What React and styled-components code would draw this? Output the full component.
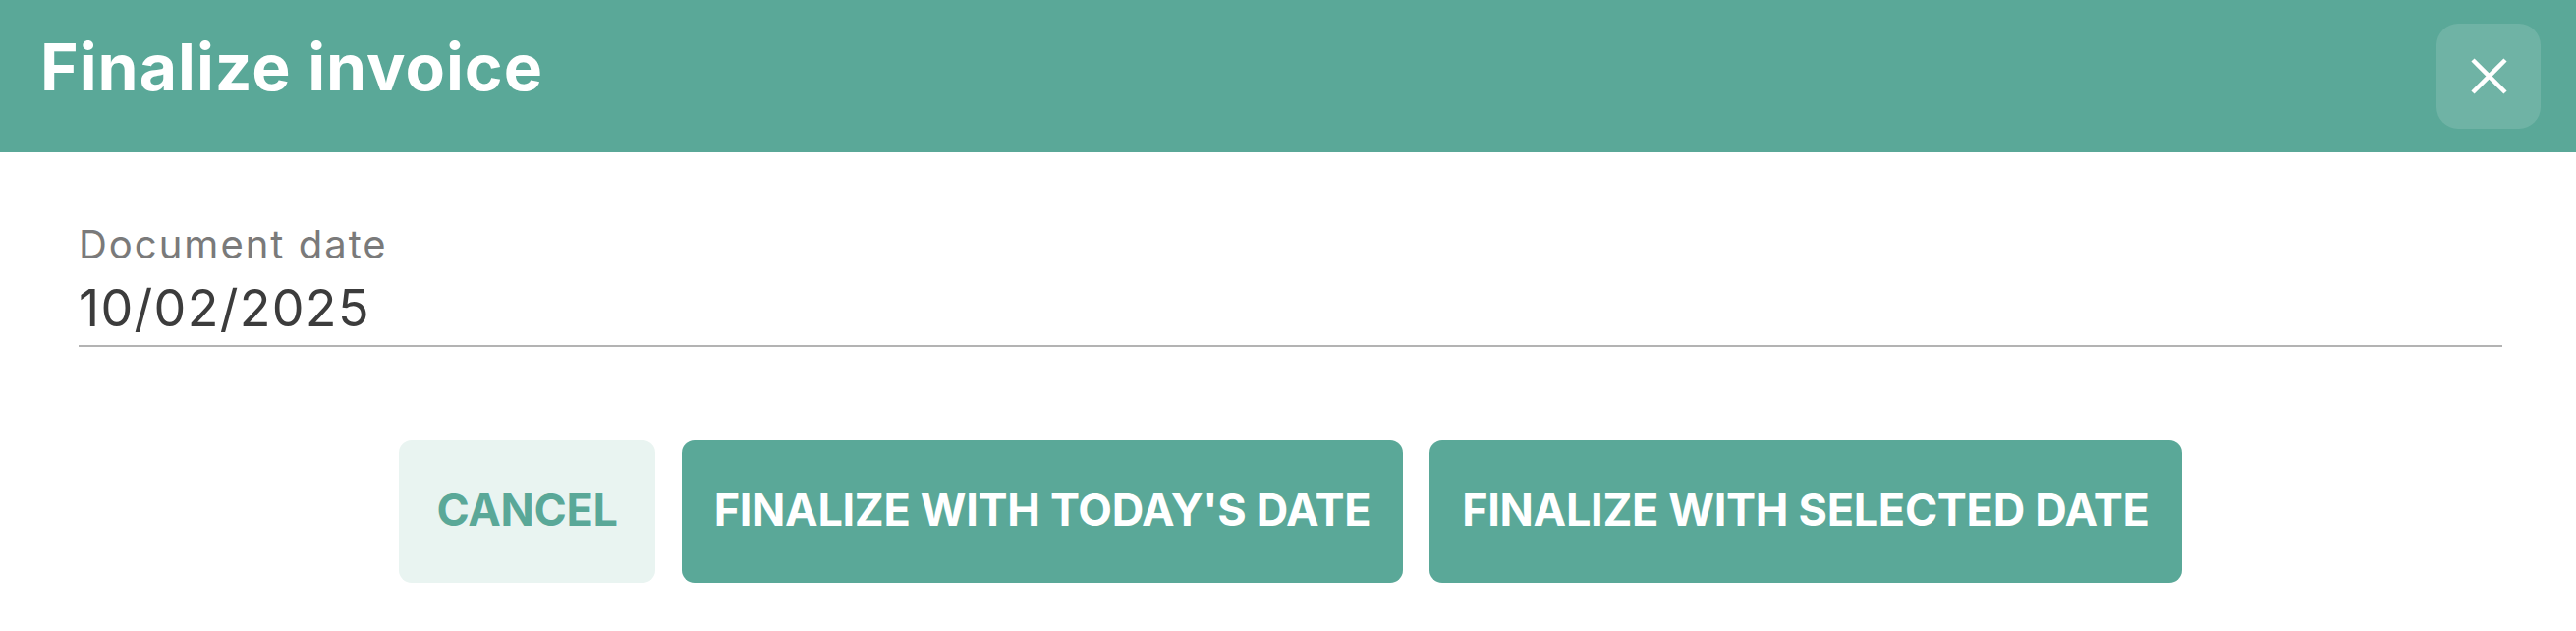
import styled, { createGlobalStyle } from "styled-components";

const GlobalStyle = createGlobalStyle`
    html, body {
        margin: 0;
        padding: 0;
        background: #ffffff;
    }
    body {
        font-family: Inter, "Liberation Sans", sans-serif;
    }
`;

const teal = "#5aa898";

const Dialog = styled.div`
    width: 2622px;
    height: 642px;
    display: flex;
    flex-direction: column;
    background: #ffffff;
`;

const Header = styled.div`
    height: 155px;
    flex-shrink: 0;
    display: flex;
    align-items: center;
    justify-content: space-between;
    padding: 0 36px 0 41px;
    background: ${teal};
    box-sizing: border-box;
`;

const Title = styled.h1`
    margin: 0;
    padding-bottom: 19px;
    font-size: 66px;
    line-height: 1;
    font-weight: 700;
    letter-spacing: 1px;
    color: #ffffff;
`;

const CloseButton = styled.button`
    width: 106px;
    height: 107px;
    border: none;
    border-radius: 22px;
    background: rgba(255, 255, 255, 0.13);
    display: flex;
    align-items: center;
    justify-content: center;
    padding: 0;
    cursor: pointer;
`;

const Body = styled.div`
    flex: 1;
    display: flex;
    flex-direction: column;
    padding: 70px 75px 49px 80px;
`;

const Field = styled.label`
    display: flex;
    flex-direction: column;
    gap: 10px;
    padding-bottom: 6px;
    border-bottom: 2px solid #b3b3b3;
`;

const FieldLabel = styled.span`
    font-size: 40px;
    line-height: 1.2;
    letter-spacing: 2px;
    color: #7a7a7a;
`;

const FieldValue = styled.span`
    font-size: 52px;
    line-height: 1.2;
    letter-spacing: 1.3px;
    color: #3c3c3c;
`;

const Actions = styled.div`
    margin-top: 95px;
    display: flex;
    justify-content: center;
    gap: 27px;
`;

const ActionButton = styled.button`
    height: 145px;
    padding: 0 ${(p) => (p.$primary ? "33px" : "38px")} 4px;
    border: none;
    border-radius: 13px;
    font-family: Inter, "Liberation Sans", sans-serif;
    font-size: 45px;
    line-height: 1;
    font-weight: 700;
    letter-spacing: -0.3px;
    text-transform: uppercase;
    cursor: pointer;
    background: ${(p) => (p.$primary ? teal : "#e9f4f1")};
    color: ${(p) => (p.$primary ? "#ffffff" : teal)};
`;

const CloseIcon = () => (
    <svg width="37" height="37" viewBox="0 0 37 37">
        <path d="M2 2 L35 35 M35 2 L2 35" stroke="#ffffff" strokeWidth="4.5" />
    </svg>
);

export default function App() {
    return (
        <>
            <GlobalStyle />
            <Dialog>
                <Header>
                    <Title>Finalize invoice</Title>
                    <CloseButton aria-label="Close">
                        <CloseIcon />
                    </CloseButton>
                </Header>
                <Body>
                    <Field>
                        <FieldLabel>Document date</FieldLabel>
                        <FieldValue>10/02/2025</FieldValue>
                    </Field>
                    <Actions>
                        <ActionButton>Cancel</ActionButton>
                        <ActionButton $primary>Finalize with today's date</ActionButton>
                        <ActionButton $primary>Finalize with selected date</ActionButton>
                    </Actions>
                </Body>
            </Dialog>
        </>
    );
}
